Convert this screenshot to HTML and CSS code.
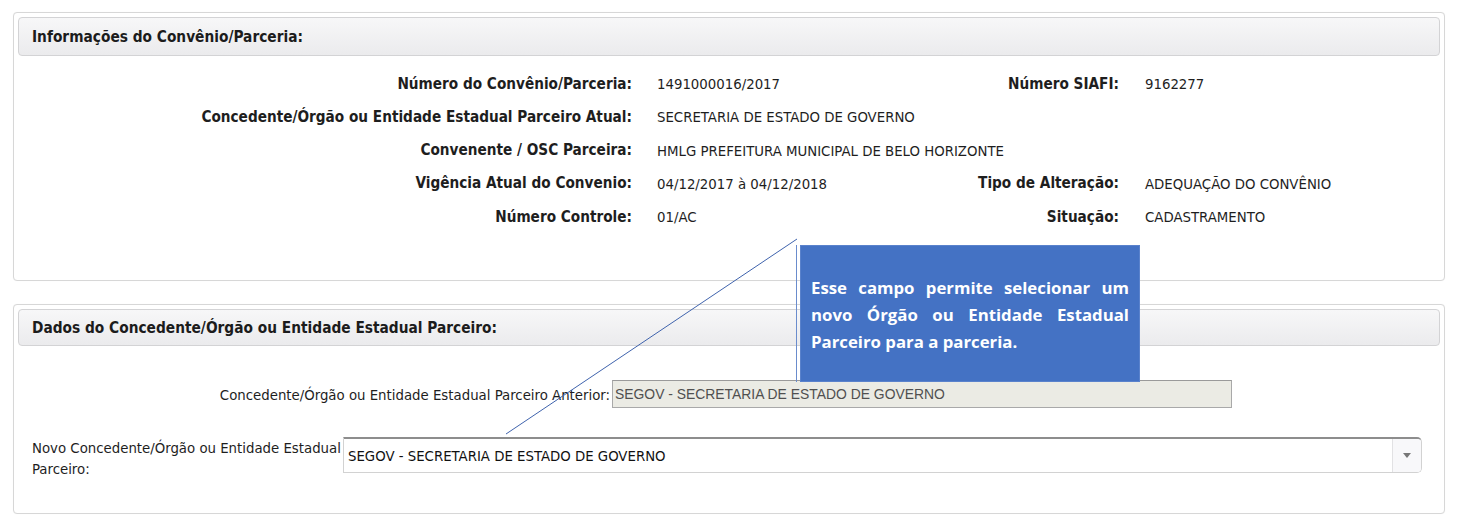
FILE: index.html
```html
<!DOCTYPE html>
<html lang="pt-BR">
<head>
<meta charset="utf-8">
<title>Convênio</title>
<link rel="stylesheet" href="styles.css">
</head>
<body>
<div class="page">
  <section class="panel panel-info">
    <div class="panel-head">Informações do Convênio/Parceria:</div>
    <div class="info">
      <div class="row">
        <span class="lbl">Número do Convênio/Parceria:</span>
        <span class="val">1491000016/2017</span>
        <span class="lbl2">Número SIAFI:</span>
        <span class="val2">9162277</span>
      </div>
      <div class="row">
        <span class="lbl">Concedente/Órgão ou Entidade Estadual Parceiro Atual:</span>
        <span class="val">SECRETARIA DE ESTADO DE GOVERNO</span>
      </div>
      <div class="row">
        <span class="lbl">Convenente / OSC Parceira:</span>
        <span class="val">HMLG PREFEITURA MUNICIPAL DE BELO HORIZONTE</span>
      </div>
      <div class="row">
        <span class="lbl">Vigência Atual do Convenio:</span>
        <span class="val">04/12/2017 à 04/12/2018</span>
        <span class="lbl2">Tipo de Alteração:</span>
        <span class="val2">ADEQUAÇÃO DO CONVÊNIO</span>
      </div>
      <div class="row">
        <span class="lbl">Número Controle:</span>
        <span class="val">01/AC</span>
        <span class="lbl2">Situação:</span>
        <span class="val2">CADASTRAMENTO</span>
      </div>
    </div>
  </section>

  <section class="panel panel-dados">
    <div class="panel-head panel-head-sm">Dados do Concedente/Órgão ou Entidade Estadual Parceiro:</div>
    <div class="form-row form-row-prev">
      <span class="f-lbl-right">Concedente/Órgão ou Entidade Estadual Parceiro Anterior:</span>
      <div class="ro-input">SEGOV - SECRETARIA DE ESTADO DE GOVERNO</div>
    </div>
    <div class="form-row form-row-new">
      <span class="f-lbl-left">Novo Concedente/Órgão ou Entidade Estadual Parceiro:</span>
      <div class="combo">
        <div class="combo-text">SEGOV - SECRETARIA DE ESTADO DE GOVERNO</div>
        <div class="combo-btn"><span class="caret"></span></div>
      </div>
    </div>
  </section>

  <svg class="leader" width="1461" height="520" viewBox="0 0 1461 520">
    <line x1="797" y1="239" x2="506" y2="434" stroke="#3f63ad" stroke-width="1"/>
    <line x1="796.5" y1="245" x2="796.5" y2="382" stroke="#6a8ccd" stroke-width="1"/>
  </svg>
  <div class="callout">
    <span class="cl-line cl-just">Esse campo permite selecionar um</span>
    <span class="cl-line cl-just">novo Órgão ou Entidade Estadual</span>
    <span class="cl-line">Parceiro para a parceria.</span>
  </div>
</div>
</body>
</html>
```

FILE: styles.css
```css
html, body {
  margin: 0;
  padding: 0;
  background: #ffffff;
}

.page {
  position: relative;
  width: 1461px;
  height: 520px;
  padding: 12px 0 0 13px;
  box-sizing: border-box;
  font-family: "DejaVu Sans Condensed", "DejaVu Sans", sans-serif;
  font-stretch: condensed;
  color: #1e1e1e;
  overflow: hidden;
}

.panel {
  width: 1432px;
  box-sizing: border-box;
  border: 1px solid #d7d7d7;
  border-radius: 4px;
  padding: 4px;
  background: #fff;
  box-shadow: 0 0 1px rgba(0,0,0,0.06);
}

.panel-info {
  height: 269px;
}

.panel-dados {
  margin-top: 23px;
  height: 210px;
}

.panel-head {
  height: 39px;
  box-sizing: border-box;
  border: 1px solid #d3d3d5;
  border-radius: 4px;
  background: linear-gradient(#f7f7f8, #ebebed);
  padding-left: 13px;
  display: flex;
  align-items: center;
  font-weight: bold;
  font-size: 15.3px;
  color: #1c1c1c;
}

.panel-head-sm {
  height: 37px;
}

.info {
  margin: 11px 0 0 -4px;
}

.row {
  display: flex;
  align-items: center;
  height: 33.25px;
  white-space: nowrap;
  font-size: 14.8px;
}

.lbl {
  width: 618px;
  flex: none;
  text-align: right;
  font-weight: bold;
  font-size: 15.2px;
}

.val {
  width: 320px;
  flex: none;
  margin-left: 25px;
}

.lbl2 {
  width: 142px;
  flex: none;
  text-align: right;
  font-weight: bold;
  font-size: 15.2px;
}

.val2 {
  margin-left: 26px;
}

.form-row {
  display: flex;
  white-space: nowrap;
  font-size: 14.8px;
}

.form-row-prev {
  margin: 34px 0 0 -4px;
  align-items: center;
}

.f-lbl-right {
  width: 596px;
  flex: none;
  text-align: right;
  margin-right: 2px;
}

.ro-input {
  width: 620px;
  height: 28px;
  box-sizing: border-box;
  border: 1px solid #a9a9a9;
  border-top-color: #9a9a9a;
  background: #ebebe4;
  font-family: "Liberation Sans", Arial, sans-serif;
  font-size: 13.9px;
  color: #505050;
  padding-left: 2px;
  display: flex;
  align-items: center;
}

.form-row-new {
  margin: 29px 0 0 14px;
  align-items: flex-start;
}

.f-lbl-left {
  width: 311px;
  flex: none;
  white-space: normal;
  line-height: 21px;
  margin-top: -0.5px;
}

.combo {
  width: 1079px;
  height: 36px;
  box-sizing: border-box;
  border: 1px solid #d2d2d2;
  border-top: 2px solid #8d8d8d;
  border-radius: 0 5px 5px 0;
  display: flex;
  background: #fff;
}

.combo-text {
  flex: 1;
  display: flex;
  align-items: center;
  padding-left: 4px;
  color: #111;
}

.combo-btn {
  width: 28px;
  border-left: 1px solid #e2e2e4;
  background: #f8f8fa;
  border-radius: 0 4px 4px 0;
  display: flex;
  align-items: center;
  justify-content: center;
}

.caret {
  width: 0;
  height: 0;
  border-left: 4px solid transparent;
  border-right: 4px solid transparent;
  border-top: 5px solid #777;
}

.leader {
  position: absolute;
  left: 0;
  top: 0;
  pointer-events: none;
}

.callout {
  position: absolute;
  left: 800px;
  top: 245px;
  width: 340px;
  height: 137px;
  box-sizing: border-box;
  background: #4472c4;
  border: 1px solid #5a82cc;
  padding: 28px 10px 0 10px;
  font-family: "Open Sans", Lato, sans-serif;
  font-stretch: normal;
  font-weight: bold;
  font-size: 16.8px;
  line-height: 27px;
  color: #ffffff;
}

.cl-line {
  display: block;
  white-space: nowrap;
}

.cl-just {
  text-align: justify;
  text-align-last: justify;
}
```
